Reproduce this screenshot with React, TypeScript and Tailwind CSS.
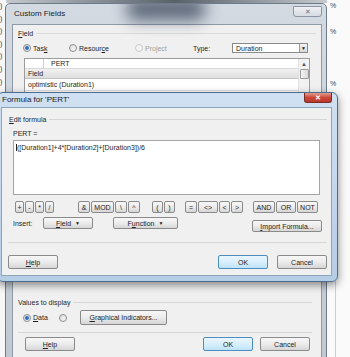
import React from "react";

const font = "font-['Liberation_Sans',Arial,sans-serif]";

function Btn({ children, className = "" }: { children: React.ReactNode; className?: string }) {
  return (
    <div
      className={
        "flex items-center justify-center rounded-[2px] border border-[#8a8a8a] bg-linear-to-b from-[#f7f7f7] via-[#ececec] to-[#d6d6d6] text-[7px] leading-none text-[#222] " +
        className
      }
    >
      {children}
    </div>
  );
}

function OkBtn({ className = "" }: { className?: string }) {
  return (
    <div
      className={
        "flex items-center justify-center rounded-[2px] border border-[#4f8cbf] bg-linear-to-b from-[#eaf6fd] via-[#d9effc] to-[#bde3f8] text-[7px] leading-none text-[#222] " +
        className
      }
    >
      OK
    </div>
  );
}

function Radio({ on = false, off = false }: { on?: boolean; off?: boolean }) {
  return (
    <span
      className={
        "inline-flex h-[8px] w-[8px] shrink-0 items-center justify-center rounded-full border " +
        (off ? "border-[#c9c9c9] bg-[#f4f4f4]" : "border-[#8b8b8b] bg-linear-to-br from-[#dcdcdc] to-[#fbfbfb]")
      }
    >
      {on && <span className="h-[4px] w-[4px] rounded-full bg-[#2d6fc4]" />}
    </span>
  );
}

const U = ({ c }: { c: string }) => <span className="underline">{c}</span>;

const ops: { t: string; w: string }[][] = [
  [
    { t: "+", w: "w-[9px]" },
    { t: "-", w: "w-[9px]" },
    { t: "*", w: "w-[9px]" },
    { t: "/", w: "w-[9px]" },
  ],
  [
    { t: "&", w: "w-[12px]" },
    { t: "MOD", w: "w-[23px]" },
    { t: "\\", w: "w-[12px]" },
    { t: "^", w: "w-[12px]" },
  ],
  [
    { t: "(", w: "w-[11px]" },
    { t: ")", w: "w-[11px]" },
  ],
  [
    { t: "=", w: "w-[12px]" },
    { t: "<>", w: "w-[20px]" },
    { t: "<", w: "w-[11px]" },
    { t: ">", w: "w-[12px]" },
  ],
  [
    { t: "AND", w: "w-[22px]" },
    { t: "OR", w: "w-[20px]" },
    { t: "NOT", w: "w-[21px]" },
  ],
];
const groupGap = ["", "ml-[24px]", "ml-[12px]", "ml-[10px]", "ml-[10px]"];

function CustomFields() {
  return (
    <div className="absolute left-[5px] top-[3px] flex h-[380px] w-[322px] flex-col overflow-hidden rounded-t-[5px] border border-[#6f7b88] bg-linear-to-b from-[#d3dae2] to-[#bfc8d2]">
      <div className="relative flex h-[20px] shrink-0 items-center justify-between pl-[8px] pr-[4px]">
        <div className="absolute left-[120px] top-[-6px] h-[22px] w-[80px] rounded-full bg-[#27344a] opacity-70 blur-[8px]" />
        <span className="relative text-[8px] text-[#1c1c1c]">Custom Fields</span>
        <div className="relative mb-[6px] flex h-[11px] w-[29px] items-center justify-center rounded-b-[3px] border border-[#8c96a2] bg-linear-to-b from-[#eef1f4] to-[#d5dbe1] text-[7px] leading-none text-[#6b7480]">
          ✕
        </div>
      </div>
      <div className="ml-[6px] mr-[4px] flex flex-1 flex-col border border-[#8f9aa6] bg-[#f0f0f0] px-[5px] text-[7px] leading-none text-[#1e1e1e]">
        <div className="mt-[3px] flex h-[10px] items-center">
          <span>
            <U c="F" />
            ield
          </span>
          <div className="ml-[3px] flex-1 border-t border-[#dcdcdc]" />
        </div>
        <div className="mt-[5px] flex h-[10px] items-center">
          <div className="ml-[5px] flex w-[46px] items-center gap-[2px]">
            <Radio on />
            <span>
              Tas<U c="k" />
            </span>
          </div>
          <div className="flex w-[66px] items-center gap-[2px]">
            <Radio />
            <span>
              Resour<U c="c" />e
            </span>
          </div>
          <div className="flex w-[58px] items-center gap-[2px] text-[#a0a0a0]">
            <Radio off />
            <span>Project</span>
          </div>
          <span className="w-[39px]">Type:</span>
          <div className="flex h-[10px] w-[76px] items-center border border-[#8a8a8a] bg-white">
            <span className="flex-1 pl-[3px]">Duration</span>
            <div className="flex h-full w-[8px] items-center justify-center border-l border-[#9a9a9a] bg-linear-to-b from-[#f4f4f4] to-[#d8d8d8] text-[5px]">
              ▼
            </div>
          </div>
        </div>
        <div className="ml-[6px] mt-[5px] flex h-[150px] w-[286px] border border-[#9c9c9c] bg-white">
          <div className="flex flex-1 flex-col">
            <div className="flex h-[10px] border-b border-[#d8d8d8]">
              <div className="w-[19px] border-r border-[#cfcfcf]" />
              <span className="flex items-center pl-[7px]">PERT</span>
            </div>
            <div className="flex h-[10px] items-center border-b border-[#c4c4c4] bg-linear-to-b from-[#f1f1f1] to-[#dedede] pl-[3px]">
              Field
            </div>
            <div className="flex h-[12px] items-center border-b border-[#e0e0e0] pl-[3px]">
              optimistic (Duration1)
            </div>
          </div>
          <div className="flex w-[11px] flex-col items-center border-l border-[#e2e2e2] bg-[#f2f2f2]">
            <span className="mt-[2px] text-[6px] text-[#555]">▲</span>
            <div className="mt-[2px] h-[10px] w-[9px] rounded-[1px] border border-[#9a9a9a] bg-linear-to-r from-[#f4f4f4] to-[#dadada]" />
          </div>
        </div>
        <div className="mt-[89px] flex h-[10px] items-center">
          <span>Values to display</span>
          <div className="ml-[3px] mr-[4px] flex-1 border-t border-[#d8d8d8]" />
        </div>
        <div className="mt-[3px] flex h-[15px] items-center">
          <div className="ml-[5px] flex w-[36px] items-center gap-[2px]">
            <Radio on />
            <span>
              <U c="D" />
              ata
            </span>
          </div>
          <Radio />
          <Btn className="ml-[13px] h-[15px] w-[87px]">
            <span>
              <U c="G" />
              raphical Indicators...
            </span>
          </Btn>
        </div>
        <div className="mr-[4px] mt-[7px] border-t border-[#d8d8d8]" />
        <div className="mt-[4px] flex h-[14px] items-center">
          <Btn className="ml-[7px] h-[14px] w-[50px]">
            <span>
              <U c="H" />
              elp
            </span>
          </Btn>
          <OkBtn className="ml-auto h-[14px] w-[50px]" />
          <Btn className="ml-[7px] mr-[6px] h-[14px] w-[50px]">Cancel</Btn>
        </div>
      </div>
    </div>
  );
}

function FormulaDialog() {
  return (
    <div className="absolute left-[-3px] top-[92px] flex h-[190px] w-[341px] flex-col rounded-[6px] border border-[#4d6d8e] bg-linear-to-b from-[#cfe0f2] via-[#c3d7ec] to-[#b6cde6] shadow-[0_3px_8px_rgba(0,0,0,0.45)]">
      <div className="flex h-[14px] shrink-0 items-start justify-between pl-[4px]">
        <span className="mt-[3px] text-[8px] leading-none text-[#1a1a1a]">Formula for 'PERT'</span>
        <div className="mr-[5px] flex h-[10px] w-[28px] items-center justify-center rounded-b-[3px] border border-t-0 border-[#7a2a22] bg-linear-to-b from-[#e39a8c] via-[#c9483a] to-[#b8392b] text-[7px] font-bold leading-none text-white">
          ✕
        </div>
      </div>
      <div className="mb-[5px] ml-[3px] mr-[5px] flex flex-1 flex-col border border-[#8ea4bb] bg-[#f0f0f0] pl-[6px] pr-[4px] text-[7px] leading-none text-[#1e1e1e]">
        <div className="mt-[6px] flex h-[10px] items-center">
          <span className="ml-[1px]">
            <U c="E" />
            dit formula
          </span>
          <div className="ml-[3px] flex-1 border-t border-[#d6d6d6]" />
        </div>
        <div className="flex flex-col pl-[5px] pr-[7px]">
          <div className="mt-[4px] flex h-[10px] items-center">PERT =</div>
          <div className="mt-[2px] h-[55px] border border-[#a5a5a5] bg-white px-[2px] pt-[3px]">
            <span className="border-l border-[#222]">([Duration1]+4*[Duration2]+[Duration3])/6</span>
          </div>
          <div className="ml-[2px] mt-[6px] flex h-[12px]">
            {ops.map((g, gi) => (
              <div key={gi} className={"flex gap-[1px] " + groupGap[gi]}>
                {g.map((o) => (
                  <Btn key={o.t} className={"h-[12px] " + o.w}>
                    {o.t}
                  </Btn>
                ))}
              </div>
            ))}
          </div>
          <div className="mt-[4px] flex h-[15px] items-start">
            <span className="mt-[3px] w-[30px]">Insert:</span>
            <Btn className="h-[12px] w-[50px] gap-[4px]">
              <span>
                <U c="F" />
                ield
              </span>
              <span className="text-[5px]">▼</span>
            </Btn>
            <Btn className="ml-[20px] h-[12px] w-[65px] gap-[4px]">
              <span>
                F<U c="u" />
                nction
              </span>
              <span className="text-[5px]">▼</span>
            </Btn>
            <Btn className="-mr-[2px] ml-auto mt-[3px] h-[12px] w-[70px]">
              <span>
                <U c="I" />
                mport Formula...
              </span>
            </Btn>
          </div>
        </div>
        <div className="mt-[10px] border-t border-[#d6d6d6]" />
        <div className="mt-[12px] flex h-[14px]">
          <Btn className="h-[14px] w-[50px]">
            <span>
              <U c="H" />
              elp
            </span>
          </Btn>
          <OkBtn className="ml-auto h-[14px] w-[50px]" />
          <Btn className="ml-[9px] h-[14px] w-[50px]">Cancel</Btn>
        </div>
      </div>
    </div>
  );
}

export default function App() {
  const rows = [7, 20, 32, 45, 58, 70, 83];
  return (
    <div className={"relative h-[357px] w-[350px] overflow-hidden bg-white " + font}>
      <div className="absolute left-0 top-0 h-[3px] w-[350px] bg-linear-to-r from-[#c9cdd2] via-[#59616b] to-[#d8dbde]" />
      <div className="absolute left-0 top-0 flex h-[357px] w-[6px] flex-col bg-[#f7f7f7]">
        {rows.map((y) => (
          <span key={y} className="h-[12.6px] pt-[2px] text-[7px] leading-none text-[#333]">
            )
          </span>
        ))}
      </div>
      <div className="absolute right-0 top-0 flex h-[357px] w-[23px] flex-col bg-[#fafafa] pl-[3px] text-[7px] leading-none text-[#444]">
        <span className="mt-[2px]">%</span>
        <span className="mt-[19px]">%</span>
        <span className="mt-[45px]">%</span>
        <div className="absolute bottom-0 left-[8px] top-[200px] border-l border-[#cfcfcf]" />
      </div>
      <CustomFields />
      <FormulaDialog />
    </div>
  );
}
